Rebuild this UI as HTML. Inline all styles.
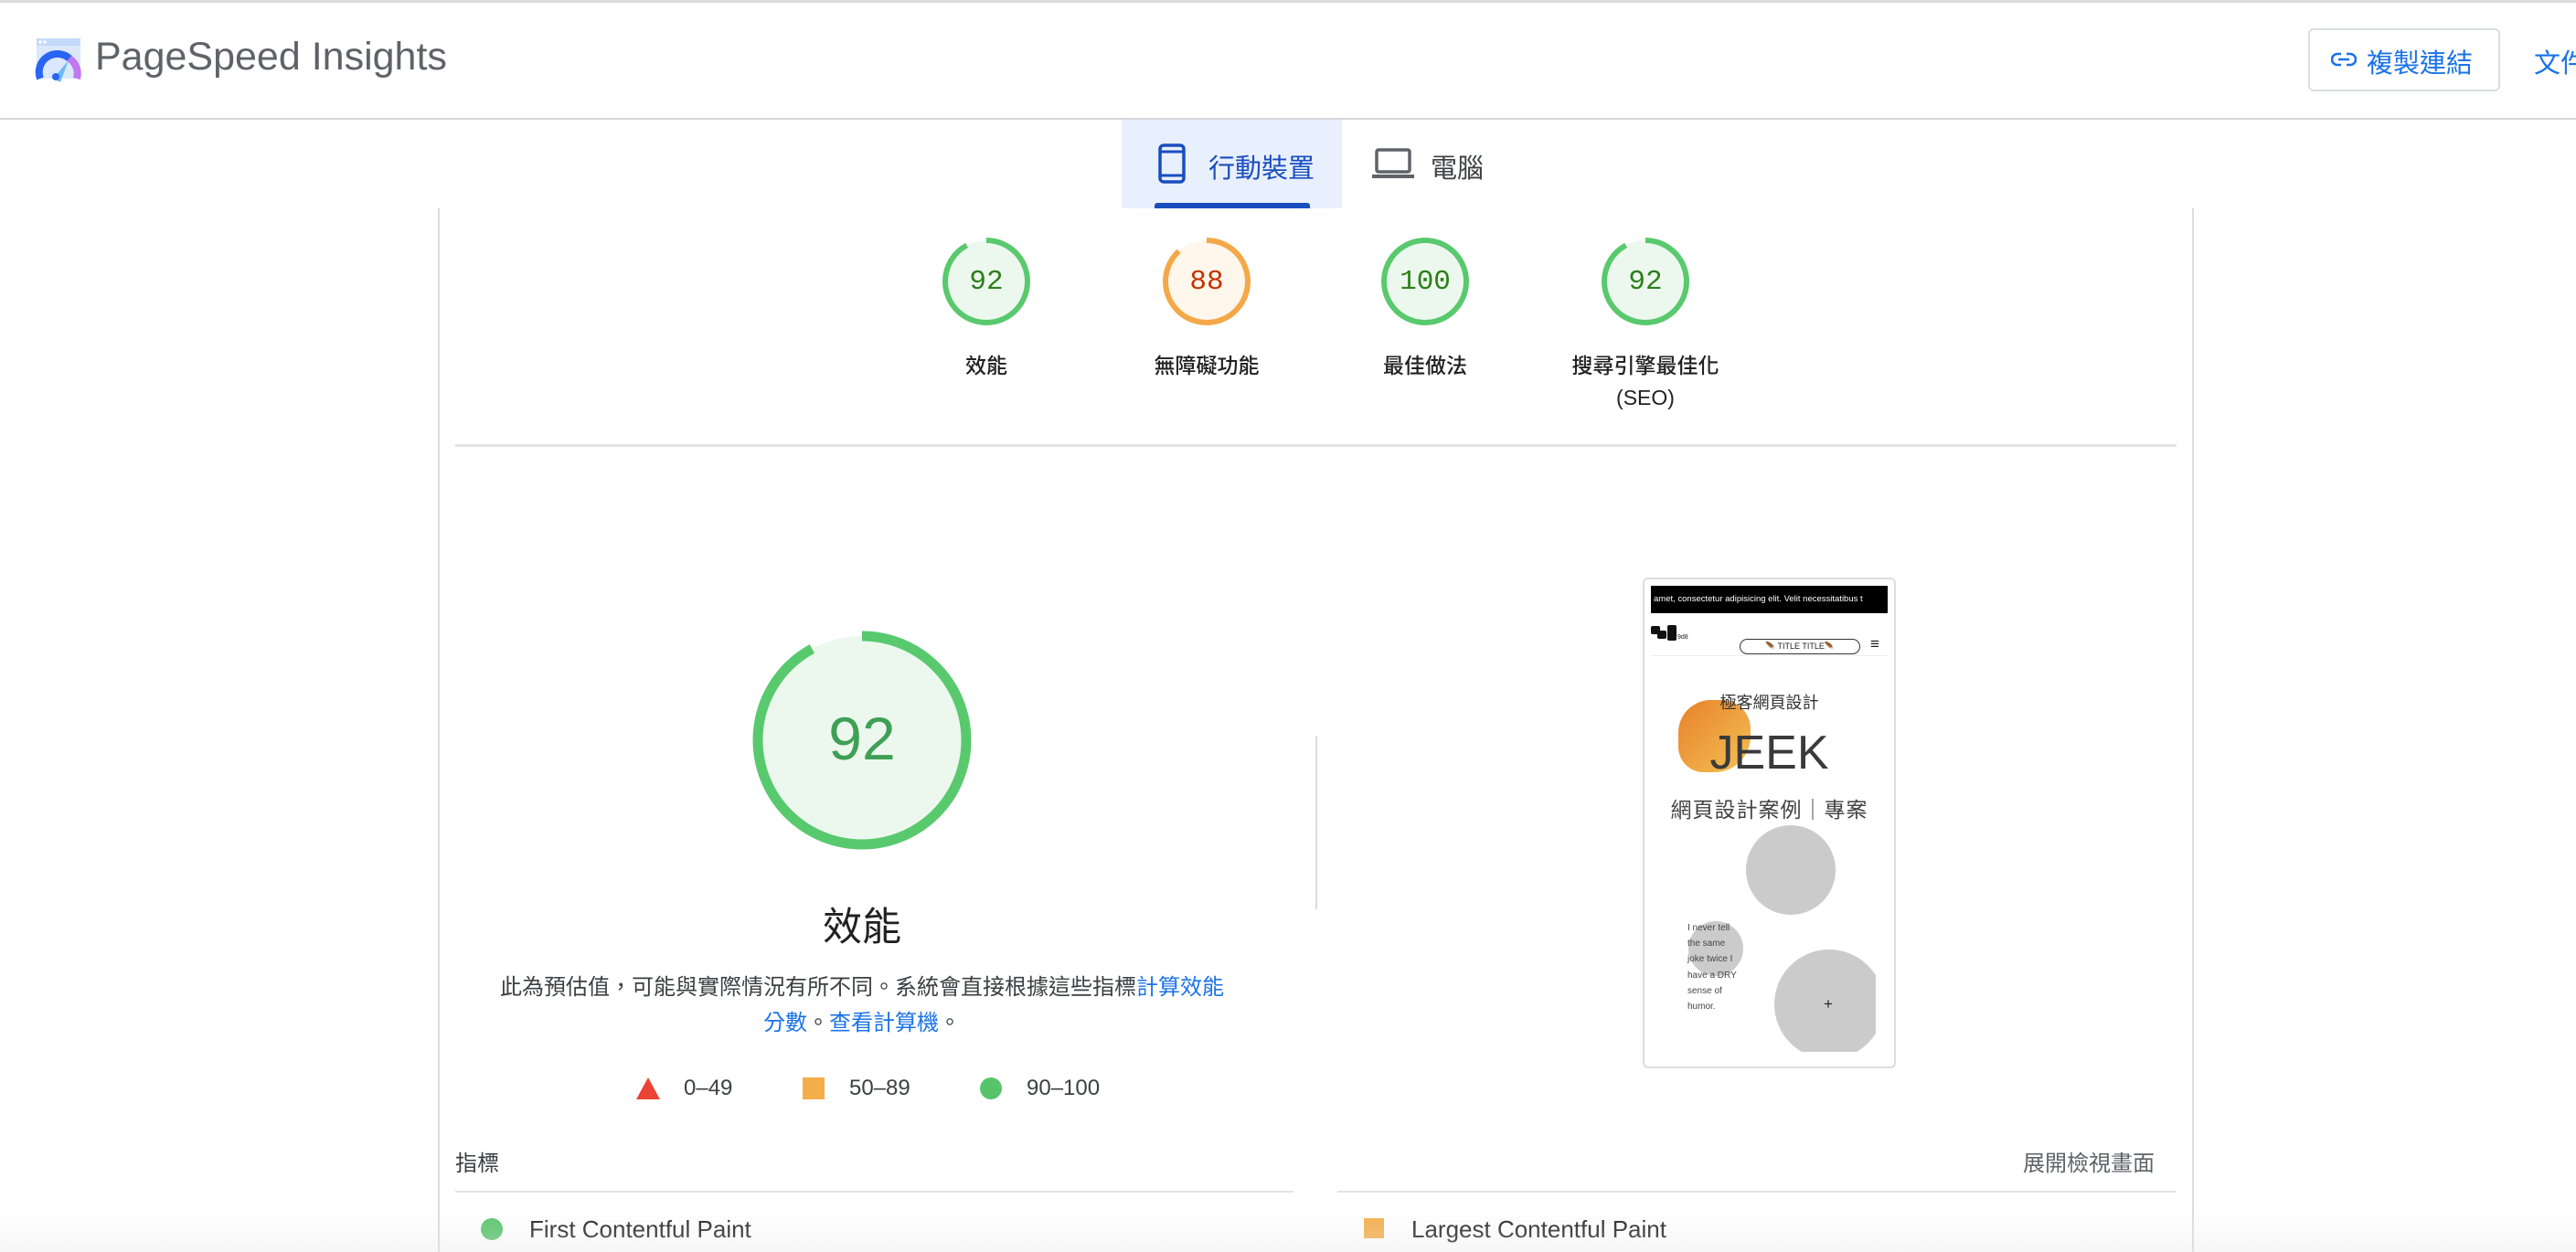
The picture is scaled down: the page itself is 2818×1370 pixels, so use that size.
<!DOCTYPE html>
<html><head><meta charset="utf-8"><style>
*{margin:0;padding:0;box-sizing:border-box}
body{width:2818px;height:1370px;position:relative;overflow:hidden;background:#fff;font-family:"Liberation Sans","Noto Sans CJK TC",sans-serif;color:#202124}
.a{position:absolute}
.t{position:absolute;white-space:nowrap}
.lbl{font-size:23px;color:#212121;text-align:center;width:240px;margin-left:-120px;font-weight:500}
.num{font-family:"Liberation Mono","DejaVu Sans Mono",monospace;font-size:31px;text-align:center}
</style></head><body>
<div class="a" style="left:0;top:0;width:2818px;height:3px;background:#dcdcdc"></div>
<div class="a" style="left:0;top:129px;width:2818px;height:2px;background:#d6d6d8"></div>
<svg class="a" style="left:38px;top:40px" width="52" height="52" viewBox="0 0 52 52">
<rect x="2" y="2" width="48" height="44" rx="3" fill="#dbe8fc"/>
<rect x="2" y="2" width="48" height="8" fill="#c4dafa"/>
<circle cx="6" cy="6" r="1.7" fill="#fff"/><circle cx="11" cy="6" r="1.7" fill="#fff"/>
<path d="M6 46 A20 20 0 0 1 38 24" stroke="#2965f1" stroke-width="8" fill="none"/>
<path d="M38 24 A20 20 0 0 1 46 46" stroke="#c178f0" stroke-width="8" fill="none"/>
<path d="M20 46 L37 26 L28 50 Z" fill="#6fb8f7"/>
<circle cx="23" cy="44" r="4" fill="#2965f1"/>
</svg>
<div class="t" style="left:104px;top:38px;font-size:43px;color:#5f6368">PageSpeed Insights</div>
<div class="a" style="left:2525px;top:31px;width:210px;height:69px;border:2px solid #dadce0;border-radius:6px"></div>
<svg class="a" style="left:2550px;top:54px" width="28" height="22" viewBox="0 0 28 22"><path d="M11 5H7a6 6 0 0 0 0 12h4M17 5h4a6 6 0 0 1 0 12h-4M8 11h12" stroke="#1a73e8" stroke-width="2.6" fill="none"/></svg>
<div class="t" style="left:2589px;top:46px;font-size:29px;color:#1a73e8">複製連結</div>
<div class="t" style="left:2772px;top:46px;font-size:29px;color:#1a73e8">文件</div>
<div class="a" style="left:1227px;top:131px;width:241px;height:97px;background:#e8f0fe"></div>
<div class="a" style="left:1263px;top:222px;width:170px;height:6px;background:#1a4dbf;border-radius:3px 3px 0 0"></div>
<svg class="a" style="left:1265px;top:156px" width="36" height="46" viewBox="0 0 36 46"><rect x="4" y="3" width="26" height="40" rx="4" stroke="#1a4dbf" stroke-width="3.5" fill="none"/><path d="M4 10h26M4 36h26" stroke="#1a4dbf" stroke-width="3"/></svg>
<div class="t" style="left:1322px;top:161px;font-size:29px;color:#1a4dbf">行動裝置</div>
<svg class="a" style="left:1500px;top:161px" width="48" height="36" viewBox="0 0 48 36"><rect x="6" y="3" width="36" height="24" rx="2" stroke="#5f6368" stroke-width="3.5" fill="none"/><path d="M1 32h46" stroke="#5f6368" stroke-width="4"/></svg>
<div class="t" style="left:1565px;top:161px;font-size:29px;color:#3c4043">電腦</div>
<div class="a" style="left:479px;top:228px;width:2px;height:1142px;background:#dadce0"></div>
<div class="a" style="left:2398px;top:228px;width:2px;height:1142px;background:#dadce0"></div>
<svg class="a" style="left:0;top:0" width="2818" height="1370">
<g fill="none" stroke-width="6">
<circle cx="1079" cy="308" r="45" fill="#ecf8ee" stroke="none"/>
<circle cx="1079" cy="308" r="45" stroke="#59c96d" stroke-dasharray="260 283" transform="rotate(-90 1079 308)"/>
<circle cx="1320" cy="308" r="45" fill="#fff6ec" stroke="none"/>
<circle cx="1320" cy="308" r="45" stroke="#f4a847" stroke-dasharray="249 283" transform="rotate(-90 1320 308)"/>
<circle cx="1559" cy="308" r="45" fill="#ecf8ee" stroke="#59c96d"/>
<circle cx="1800" cy="308" r="45" fill="#ecf8ee" stroke="none"/>
<circle cx="1800" cy="308" r="45" stroke="#59c96d" stroke-dasharray="260 283" transform="rotate(-90 1800 308)"/>
<circle cx="943" cy="810" r="114" fill="#ecf8ee" stroke="none"/>
<circle cx="943" cy="810" r="114" stroke="#59c96d" stroke-width="11" stroke-dasharray="659 716" transform="rotate(-90 943 810)"/>
</g>
</svg>
<div class="t num" style="left:1039px;top:291px;width:80px;color:#2d7f1a">92</div>
<div class="t num" style="left:1280px;top:291px;width:80px;color:#c33300">88</div>
<div class="t num" style="left:1509px;top:291px;width:100px;color:#2d7f1a">100</div>
<div class="t num" style="left:1760px;top:291px;width:80px;color:#2d7f1a">92</div>
<div class="t lbl" style="left:1079px;top:381px">效能</div>
<div class="t lbl" style="left:1320px;top:381px">無障礙功能</div>
<div class="t lbl" style="left:1559px;top:381px">最佳做法</div>
<div class="t lbl" style="left:1800px;top:381px">搜尋引擎最佳化</div>
<div class="t lbl" style="left:1800px;top:422px">(SEO)</div>
<div class="a" style="left:498px;top:486px;width:1883px;height:3px;background:#e4e4e4"></div>
<div class="t" style="left:843px;top:770px;width:200px;text-align:center;font-size:66px;color:#3fa055">92</div>
<div class="t" style="left:843px;top:980px;width:200px;text-align:center;font-size:43px;color:#212121">效能</div>
<div class="t" style="left:543px;top:1060px;width:800px;text-align:center;font-size:24px;color:#3c4043">此為預估值，可能與實際情況有所不同。系統會直接根據這些指標<span style="color:#1a73e8">計算效能</span></div>
<div class="t" style="left:543px;top:1099px;width:800px;text-align:center;font-size:24px;color:#3c4043"><span style="color:#1a73e8">分數</span>。<span style="color:#1a73e8">查看計算機</span>。</div>
<svg class="a" style="left:695px;top:1178px" width="28" height="26"><path d="M14 1 L27 25 L1 25Z" fill="#eb4335"/></svg>
<div class="t" style="left:748px;top:1177px;font-size:24px;color:#3c4043">0–49</div>
<div class="a" style="left:878px;top:1179px;width:24px;height:24px;background:#f4ae4a"></div>
<div class="t" style="left:929px;top:1177px;font-size:24px;color:#3c4043">50–89</div>
<div class="a" style="left:1072px;top:1179px;width:24px;height:24px;border-radius:50%;background:#57c46b"></div>
<div class="t" style="left:1123px;top:1177px;font-size:24px;color:#3c4043">90–100</div>
<div class="a" style="left:1439px;top:805px;width:2px;height:190px;background:#dadce0"></div>
<!-- screenshot -->
<div class="a" style="left:1797px;top:632px;width:277px;height:537px;border:2px solid #dcdcdc;border-radius:6px;overflow:hidden;background:#fff">
 <div class="a" style="left:7px;top:7px;width:259px;height:30px;background:#000;color:#fff;font-size:9.5px;line-height:30px;padding-left:3px;overflow:hidden;white-space:nowrap">amet, consectetur adipisicing elit. Velit necessitatibus t</div>
 <div class="a" style="left:7px;top:51px;width:10px;height:9px;background:#111;border-radius:2px"></div>
 <div class="a" style="left:14px;top:56px;width:10px;height:9px;background:#111;border-radius:2px"></div>
 <div class="a" style="left:25px;top:50px;width:10px;height:17px;background:#111;border-radius:2px"></div>
 <div class="t" style="left:36px;top:60px;font-size:7px">9d8</div>
 <div class="a" style="left:104px;top:65px;width:132px;height:17px;border:1.5px solid #333;border-radius:9px;font-size:9px;text-align:center;line-height:14px">🪶 TITLE TITLE🪶</div>
 <div class="t" style="left:247px;top:61px;font-size:17px">≡</div>
 <div class="a" style="left:7px;top:83px;width:259px;height:1px;background:#eee"></div>
 <div class="a" style="left:37px;top:132px;width:79px;height:79px;border-radius:45% 40% 50% 35%;background:linear-gradient(135deg,#e8812c,#f3c153)"></div>
 <div class="t" style="left:0;top:121px;width:273px;text-align:center;font-size:18px;color:#333">極客網頁設計</div>
 <div class="t" style="left:0;top:160px;width:273px;text-align:center;font-size:52px;color:#3a3a3a">JEEK</div>
 <div class="t" style="left:0;top:233px;width:273px;text-align:center;font-size:23px;letter-spacing:1px;color:#444">網頁設計案例｜專案</div>
 <div class="a" style="left:111px;top:269px;width:98px;height:98px;border-radius:50%;background:#cbcbcb"></div>
 <div class="a" style="left:48px;top:374px;width:60px;height:60px;border-radius:50%;background:#cbcbcb"></div>
 <div class="a" style="left:47px;top:373px;font-size:10px;line-height:17.2px;color:#444;width:62px">I never tell the same joke twice I have a DRY sense of humor.</div>
 <div class="a" style="left:0;top:0;width:253px;height:517px;overflow:hidden">
  <div class="a" style="left:142px;top:405px;width:120px;height:120px;border-radius:50%;background:#cbcbcb"></div>
 </div>
 <div class="t" style="left:196px;top:455px;font-size:17px;color:#222">+</div>
</div>
<div class="t" style="left:498px;top:1253px;font-size:24px;color:#3c4043">指標</div>
<div class="t" style="left:2213px;top:1253px;font-size:24px;color:#5f6368">展開檢視畫面</div>
<div class="a" style="left:498px;top:1303px;width:917px;height:2px;background:#e4e4e4"></div>
<div class="a" style="left:1463px;top:1303px;width:918px;height:2px;background:#e4e4e4"></div>
<div class="a" style="left:526px;top:1333px;width:24px;height:24px;border-radius:50%;background:#57c46b"></div>
<div class="t" style="left:579px;top:1330px;font-size:26px;color:#212121">First Contentful Paint</div>
<div class="a" style="left:1492px;top:1333px;width:22px;height:22px;background:#f4ae4a"></div>
<div class="t" style="left:1544px;top:1330px;font-size:26px;color:#212121">Largest Contentful Paint</div>
<div class="a" style="left:0;top:1320px;width:2818px;height:50px;background:linear-gradient(rgba(235,235,235,0),rgba(232,232,232,0.35))"></div>
</body></html>
